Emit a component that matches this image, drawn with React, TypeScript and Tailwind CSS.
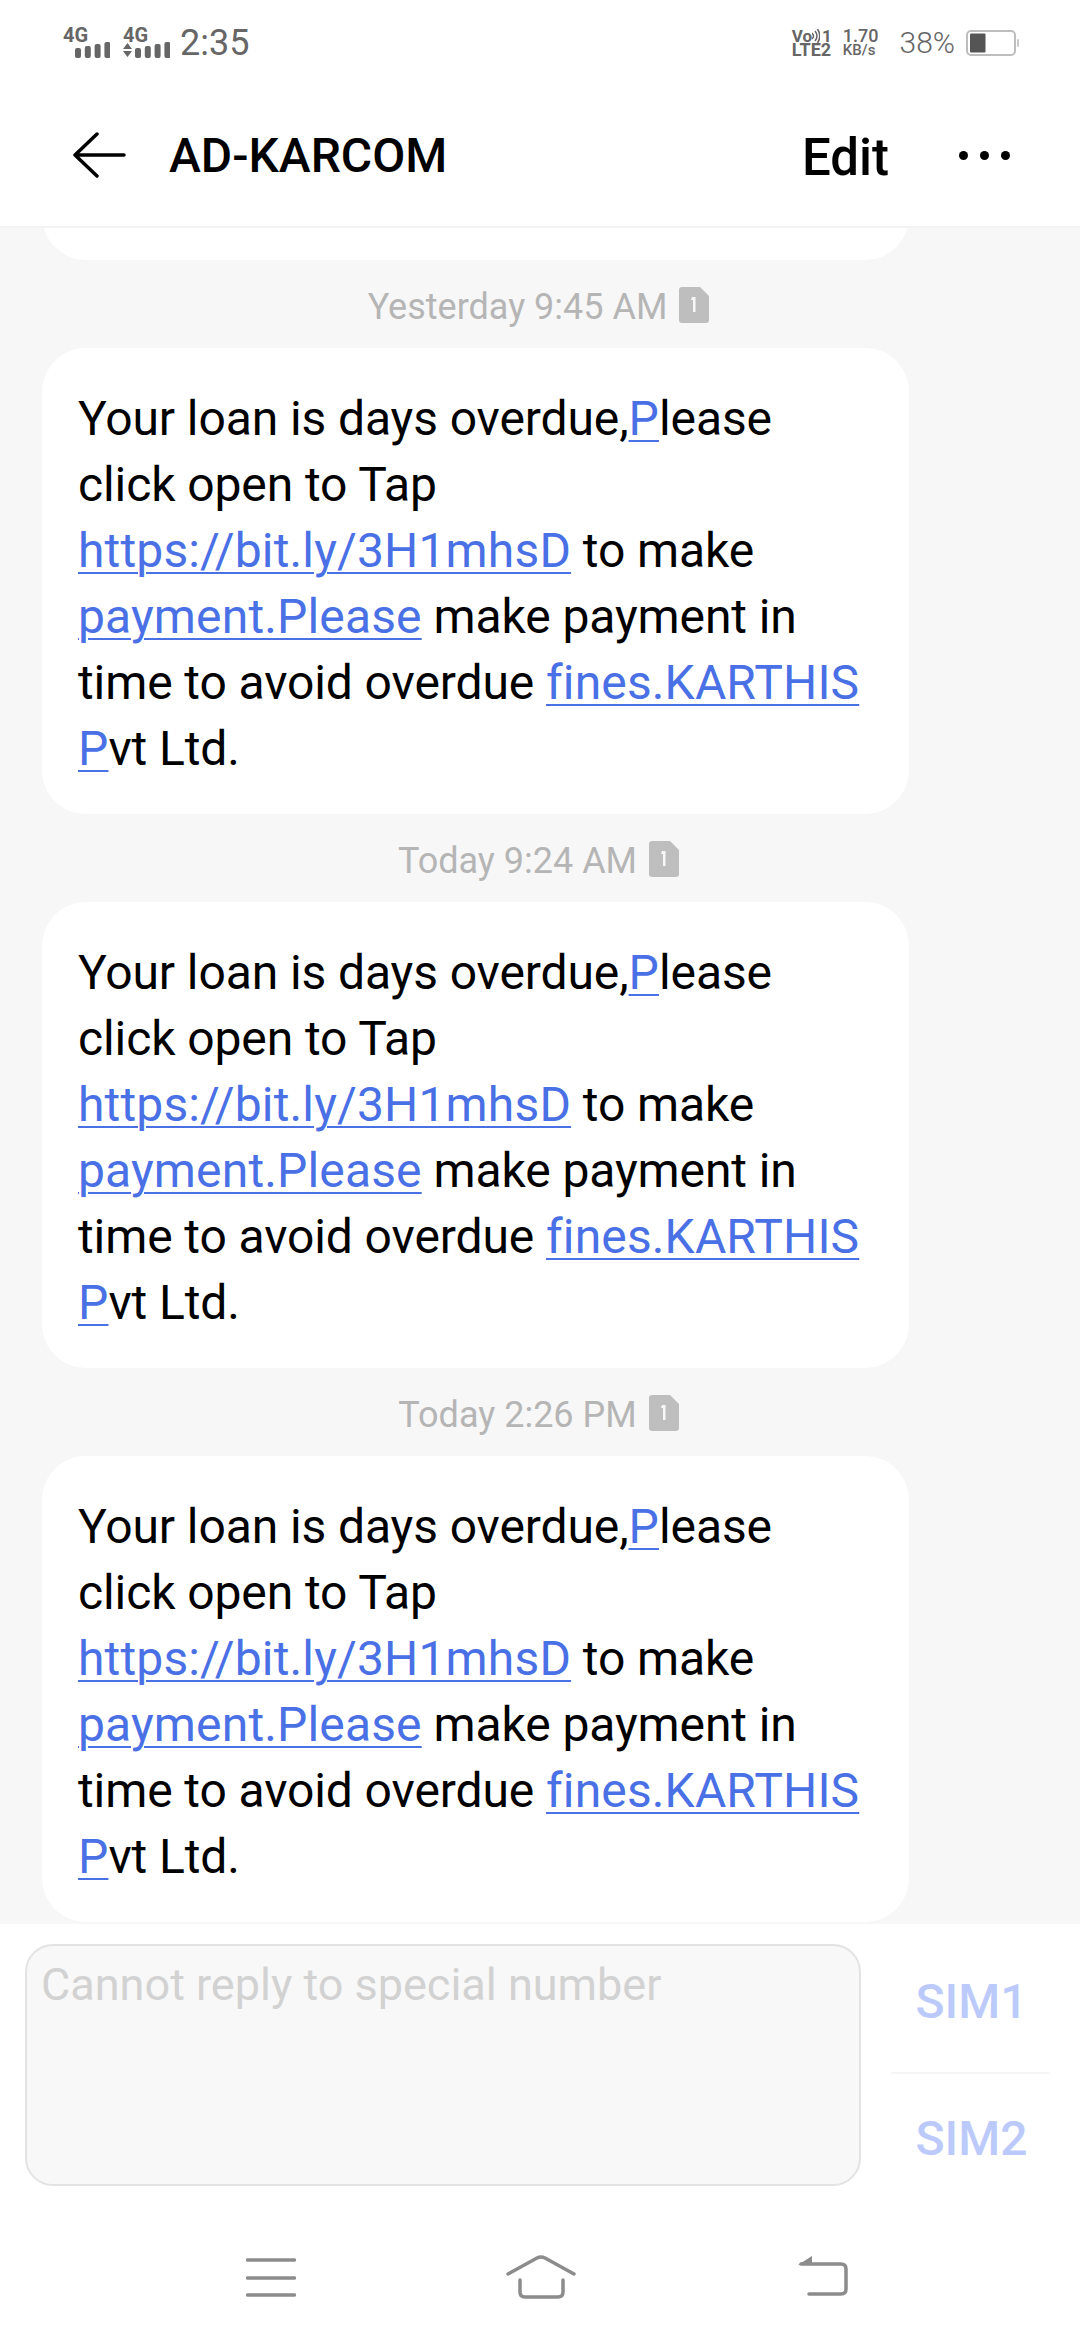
const Link = ({ children }: { children: string }) => (
  <span className="tracking-[0.15px] text-[#4a70e6] underline decoration-[2px] underline-offset-[5px]">{children}</span>
);

const Message = () => (
  <div className="mx-[42px] w-[867px] rounded-[44px] bg-white px-[36px] pb-[32px] pt-[38px] text-[48px] leading-[66px] tracking-[-0.1px] text-black">
    Your loan is days overdue,<Link>P</Link>lease
    <br />
    click open to Tap
    <br />
    <Link>https://bit.ly/3H1mhsD</Link> to make
    <br />
    <Link>payment.Please</Link> make payment in
    <br />
    time to avoid overdue <Link>fines.KARTHIS</Link>
    <br />
    <Link>P</Link>vt Ltd.
  </div>
);

const Stamp = ({ time }: { time: string }) => (
  <div className="flex h-[88px] items-center justify-center gap-[12px] pr-[3px] pt-[6px] text-[36px] text-[#b5b5b5]">
    <span>{time}</span>
    <svg width="30" height="36" viewBox="0 0 30 36" className="mb-[4px]">
      <path d="M3 0H21L30 9V33a3 3 0 0 1-3 3H3a3 3 0 0 1-3-3V3a3 3 0 0 1 3-3Z" fill="#bebebe" />
      <path d="M13 10h3.500v15H14V13h-2Z" fill="#f7f7f7" />
    </svg>
  </div>
);

const Signal = ({ arrows }: { arrows?: boolean }) => (
  <div className="w-[47px]">
    <div className="h-[14px] text-[20px] font-bold leading-[14px]">4G</div>
    <svg width="47" height="16" viewBox="0 0 47 16" className="block">
      {arrows && <path d="M0 7L4.500 1L9 7ZM0 9L4.500 15L9 9Z" fill="#666" />}
      {[0, 1, 2, 3].map((i) => {
        const h = 10 + i * 2;
        return <rect key={i} x={12 + i * 9.8} y={16 - h} width="6" height={h} rx="2" fill="#666" />;
      })}
    </svg>
  </div>
);

const Battery = () => (
  <svg width="54" height="26" viewBox="0 0 54 26">
    <rect x="1" y="1" width="48" height="24" rx="4" fill="#fff" stroke="#bdbdbd" strokeWidth="2" />
    <rect x="4" y="3.500" width="15.500" height="19" rx="1" fill="#555" />
    <rect x="51" y="9" width="2" height="8" rx="1" fill="#c9c9c9" />
  </svg>
);

const MenuIcon = () => (
  <svg width="50" height="44" viewBox="0 0 50 44">
    <path d="M1.500 5H48.500M1.500 23H48.500M1.500 40H48.500" stroke="#8c8c8c" strokeWidth="3.500" strokeLinecap="round" />
  </svg>
);

const HomeIcon = () => (
  <svg width="70" height="44" viewBox="0 0 70 44" fill="none" stroke="#8c8c8c" strokeWidth="3.500" strokeLinecap="round" strokeLinejoin="round">
    <path d="M2 19L31 3Q35 1 39 3L68 19" />
    <path d="M14 25V37Q14 42 19 42H52Q57 42 57 37V25" />
  </svg>
);

const BackIcon = () => (
  <svg width="52" height="44" viewBox="0 0 52 44">
    <path d="M0 10L14 1V10Z" fill="#8c8c8c" />
    <path d="M3 9H43Q48 9 48 14V34Q48 39 43 39H11" fill="none" stroke="#8c8c8c" strokeWidth="3.500" strokeLinecap="round" />
  </svg>
);

export default function App() {
  return (
    <div className="flex h-[2340px] w-[1080px] flex-col overflow-hidden bg-white font-['Roboto',sans-serif]">
      {/* status bar */}
      <div className="flex h-[86px] items-center pl-[63px] pr-[60px] text-[#666]">
        <div className="flex items-center gap-[13px]">
          <Signal />
          <Signal arrows />
          <span className="ml-[-3px] text-[36px] leading-none">2:35</span>
        </div>
        <div className="ml-auto flex items-center">
          <div className="flex w-[40px] flex-col font-bold leading-[14px]">
            <div className="flex items-center text-[17px]">
              <span>Vo</span>
              <svg width="8" height="14" viewBox="0 0 8 14" fill="none" stroke="#666" strokeWidth="1.500">
                <path d="M0 4Q3 7 0 10M3 2Q7 7 3 12M5.500 0Q10 7 5.500 14" />
              </svg>
              <span className="ml-auto">1</span>
            </div>
            <span className="text-[18px]">LTE2</span>
          </div>
          <div className="ml-[11px] flex flex-col text-[18px] font-medium leading-[14px]">
            <span>1.70</span>
            <span className="text-[15px]">KB/s</span>
          </div>
          <span className="ml-[21px] text-[30px] font-light leading-none">38%</span>
          <div className="ml-[11px]">
            <Battery />
          </div>
        </div>
      </div>

      {/* header */}
      <div className="flex h-[142px] shrink-0 items-center border-b-2 border-[#f3f3f3] pb-[2px] pl-[73px] pr-[70px] text-black">
        <svg width="53" height="46" viewBox="0 0 53 46" fill="none" stroke="#000" strokeWidth="3.500" strokeLinecap="round" strokeLinejoin="round">
          <path d="M24 2L2 23L24 44M2 23H51" />
        </svg>
        <h1 className="ml-[43px] mt-[2px] text-[48px] font-medium leading-none">AD-KARCOM</h1>
        <span className="ml-auto mr-[70px] mt-[5px] text-[51px] font-medium leading-none">Edit</span>
        <div className="flex gap-[12px]">
          <span className="h-[9px] w-[9px] rounded-full bg-black" />
          <span className="h-[9px] w-[9px] rounded-full bg-black" />
          <span className="h-[9px] w-[9px] rounded-full bg-black" />
        </div>
      </div>

      {/* messages */}
      <div className="h-[1696px] shrink-0 overflow-hidden bg-[#f7f7f7]">
        <div className="mx-[42px] mt-[-434px] h-[466px] w-[867px] rounded-[44px] bg-white" />
        <Stamp time="Yesterday 9:45 AM" />
        <Message />
        <Stamp time="Today 9:24 AM" />
        <Message />
        <Stamp time="Today 2:26 PM" />
        <Message />
      </div>

      {/* reply box */}
      <div className="flex pl-[25px] pt-[20px]">
        <div className="h-[242px] w-[836px] rounded-[28px] border-2 border-[#e3e3e3] bg-[#f8f8f8] pl-[14px] pt-[14px] text-[45px] leading-[50px] text-[#d2d2d2]">
          Cannot reply to special number
        </div>
        <div className="ml-[30px] flex w-[159px] flex-col text-center text-[48px] font-medium text-[#bccafb]">
          <div className="h-[112px] pl-[2px] pt-[2px] leading-[112px]">SIM1</div>
          <div className="mt-[16px] h-[2px] bg-[#f5f5f5]" />
          <div className="h-[130px] pl-[2px] leading-[130px]">SIM2</div>
        </div>
      </div>

      {/* nav */}
      <div className="mt-[51px] flex pl-[246px]">
        <MenuIcon />
        <div className="ml-[210px]">
          <HomeIcon />
        </div>
        <div className="ml-[222px]">
          <BackIcon />
        </div>
      </div>
    </div>
  );
}
